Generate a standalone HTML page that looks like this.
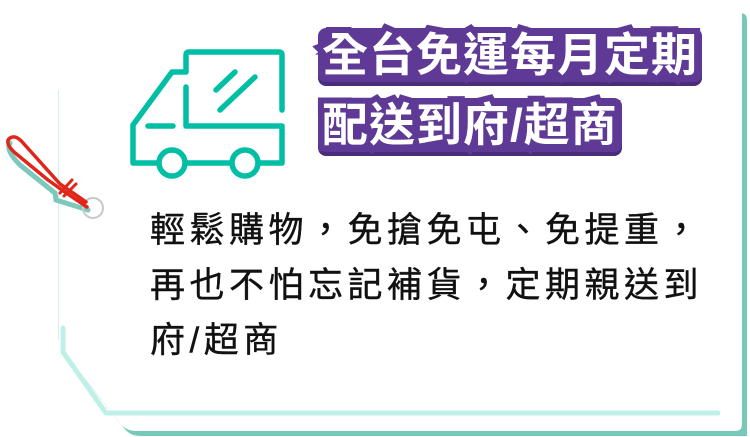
<!DOCTYPE html>
<html><head><meta charset="utf-8"><style>
html,body{margin:0;padding:0;background:#fff;width:750px;height:437px;overflow:hidden;position:relative;font-family:"Liberation Sans","Noto Sans CJK TC",sans-serif}
svg{position:absolute;left:0;top:0}
.t{position:absolute;left:318px;font-size:46px;font-weight:bold;color:#fff;letter-spacing:1px;line-height:54px;white-space:nowrap;
 -webkit-text-stroke:12px #5e3a96;paint-order:stroke fill;background:#5e3a96;padding:0 4px;
 box-shadow:0 4px 0 #4a2c7a;border-radius:8px}
.b{position:absolute;left:150px;top:203px;font-size:35px;line-height:55px;letter-spacing:4.5px;color:#111;white-space:nowrap;-webkit-text-stroke:0.4px #111}
</style></head><body>
<svg width="750" height="437" viewBox="0 0 750 437">
 <path d="M64 13 H740 Q747 13 747 20 V436 H140 Q130 436 124 428 L63 352 Z" fill="#76c8b9"/>
 <path d="M58 5 H735 Q742 5 742 12 V424 Q742 431 735 431 H136 Q126 431 120 423 L62 350 Q58 345 58 338 Z" fill="#fff"/>
 <line x1="58.5" y1="90" x2="58.5" y2="340" stroke="#d6efeb" stroke-width="1"/>
 <path d="M63 328 V352 L106 413 H718" fill="none" stroke="#bff0e8" stroke-width="5" stroke-linecap="round" stroke-linejoin="round"/>
 <g fill="none" stroke="#00bfa5" stroke-width="5.5" stroke-linecap="round" stroke-linejoin="round">
  <path d="M186 87 V126 H282 V163 H133 V125 L172 72 H186 V55 Q186 52 189 52 H279 Q282 52 282 55 V110"/>
  <line x1="148" y1="126" x2="173" y2="126"/>
  <line x1="216" y1="90" x2="235" y2="72"/>
  <line x1="220" y1="110" x2="255" y2="77"/>
  <circle cx="172" cy="163" r="13" fill="#fff"/>
  <circle cx="245" cy="163" r="13" fill="#fff"/>
 </g>
 <path d="M10 143 Q5 150 20 165 L55 193 L56 200 L88 210" fill="none" stroke="#7cc8bc" stroke-width="5" stroke-linecap="round"/>
 <circle cx="93" cy="208" r="10" fill="none" stroke="#c8c8c8" stroke-width="2"/>
 <path d="M87 207 L62 190 L48 180 L14 152 Q4 142 10 138 Q16 134 24 144 L60 184 L86 202" fill="none" stroke="#e0261a" stroke-width="3.5" stroke-linecap="round" stroke-linejoin="round"/>
 <path d="M60 193 L72 180 M64 196 L76 184" stroke="#e0261a" stroke-width="3" stroke-linecap="round"/>
</svg>
<div class="t" style="top:28px">全台免運每月定期</div>
<div class="t" style="top:98px">配送到府/超商</div>
<div class="b">輕鬆購物，免搶免屯、免提重，<br>再也不怕忘記補貨，定期親送到<br>府/超商</div>
</body></html>
